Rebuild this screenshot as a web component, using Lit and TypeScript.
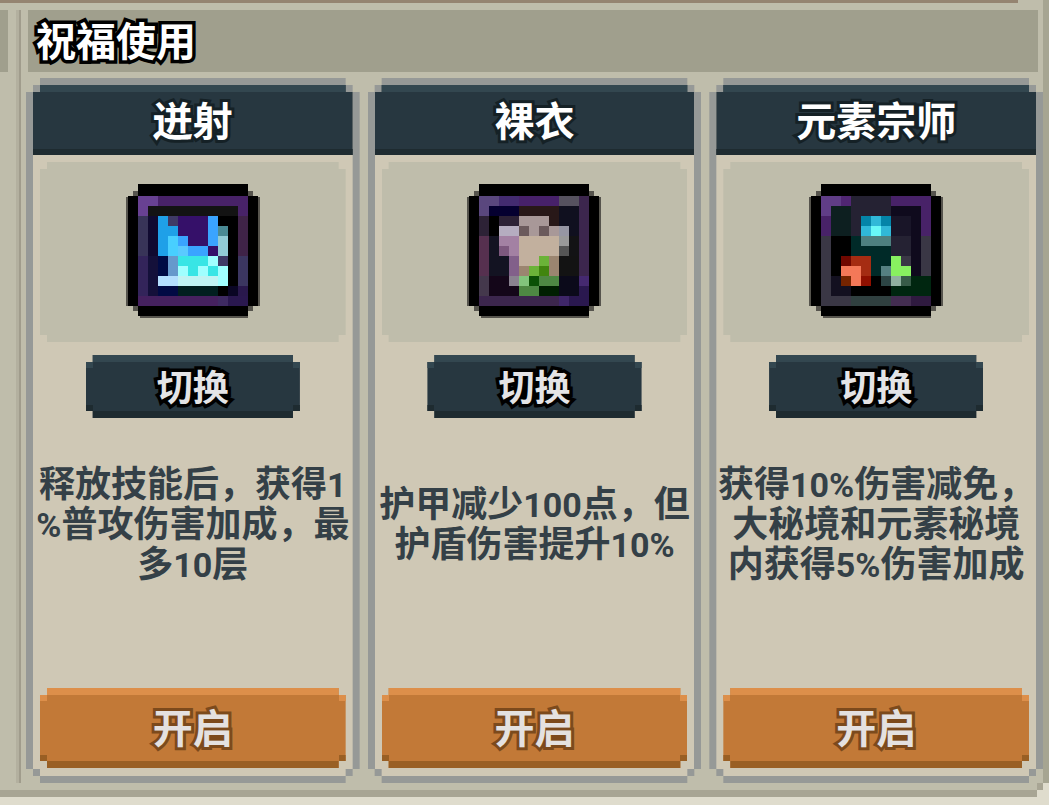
import { LitElement, html, svg, css } from "lit";
import { customElement, property } from "lit/decorators.js";

interface Blessing {
  name: string;
  art: string;
  lines: string[];
}

// Each row lists runs of "count*colour" on an 11 x 11 grid.
const ART: Record<string, string[]> = {
  burst: [
    "2*684192 9*482268",
    "1*684192 9*131313 1*482268",
    "1*383458 1*100a30 1*1fa0e8 1*3f3a66 3*351069 1*3aa4ff 2*000000 1*3f2347",
    "1*383458 1*100a30 2*1fa0e8 3*351069 1*3aa4ff 1*4a8a94 1*000000 1*3f2347",
    "1*383458 1*100a30 1*1fa0e8 1*48cfff 1*3aa4ff 2*351069 1*3aa4ff 1*92ccd6 1*000000 1*3f2347",
    "1*383458 1*100a30 1*1fa0e8 1*48cfff 1*5acaff 2*3aa4ff 1*351069 1*92ccd6 1*000000 1*3f2347",
    "1*33245a 1*14103a 1*000a44 1*6699cc 3*38e5e5 1*a0ffff 1*3f3a66 1*000000 1*3b3660",
    "1*33245a 1*14103a 1*000a44 1*6699cc 1*a0ffff 1*38e5e5 1*a0ffff 1*38e5e5 1*a0ffff 1*000000 1*3b3660",
    "1*33245a 1*14103a 2*b3dfff 4*c0f3f3 1*a0ffff 1*000000 1*3b3660",
    "1*33245a 1*14103a 2*000a44 4*001f1f 1*000000 1*0a0624 1*29184c",
    "8*45215f 1*3e2a62 2*2a184f",
  ],
  bare: [
    "2*5a477e 2*432b70 4*47216a 2*56525f 1*3c264d",
    "1*5a477e 3*050030 4*281818 2*10101f 1*3c264d",
    "1*2d2236 1*000000 2*2d2236 3*a89898 1*281818 2*10101f 1*3c264d",
    "1*2d2236 1*000000 2*b5adc0 1*6b5a5c 1*a89898 1*6b5a5c 1*a89898 1*9696a3 1*10101f 1*3c264d",
    "1*56304f 1*131322 2*a381a3 4*c2b09e 1*999999 1*131315 1*3c264d",
    "1*56304f 1*131322 1*7d587e 1*a381a3 4*c2b09e 1*555555 1*131315 1*3c264d",
    "1*56304f 2*131322 1*82608a 2*c2b09e 1*6bb338 1*9b8570 2*131313 1*3c264d",
    "1*56304f 2*131322 1*82608a 1*9b8570 1*6bb338 1*41850f 1*9b8570 2*131313 1*3c264d",
    "1*44384c 2*140619 1*8a8290 1*82c47c 1*0b5005 2*4e8843 2*0b0a1a 1*452970",
    "1*44384c 3*140619 2*4e8843 2*001f00 2*0b0a1a 1*2a184f",
    "8*3c264d 1*3f2669 2*2a184f",
  ],
  elements: [
    "2*603d87 1*502673 4*252233 4*482268",
    "1*603d87 2*0d1f20 4*252233 3*0f0a1d 1*482268",
    "1*482268 2*0d1f20 1*252233 1*0484a8 1*30b8d8 1*0484a8 2*191528 1*0f0a1d 1*482268",
    "1*482268 2*0d1f20 1*252233 1*30b8d8 1*68f8f8 1*30b8d8 2*191528 1*0f0a1d 1*482268",
    "1*3a3745 2*000000 1*002a28 3*4e8080 2*252233 1*0f0a1d 1*3a3745",
    "1*3a3745 2*000000 4*002a28 2*252233 1*0f0a1d 1*3a3745",
    "1*3a3745 1*000000 1*700800 2*a52c12 2*002a28 1*88f060 1*3a3745 1*0f0a1d 1*3a3745",
    "1*3a3745 1*000000 2*f47858 1*a52c12 1*002a28 1*558082 2*88f060 1*0f0a1d 1*3a3745",
    "1*3a3745 1*131020 1*752400 1*f47858 1*901000 1*000000 1*2c4545 1*90b0a0 1*385b48 2*002610",
    "1*3a3745 2*131020 4*000000 4*002610",
    "3*3a3745 4*304040 2*432d51 2*2f1a40",
  ],
};

const BLESSINGS: Blessing[] = [
  { name: "迸射", art: "burst", lines: ["释放技能后，获得1", "%普攻伤害加成，最", "多10层"] },
  { name: "裸衣", art: "bare", lines: ["护甲减少100点，但", "护盾伤害提升10%"] },
  { name: "元素宗师", art: "elements", lines: ["获得10%伤害减免，", "大秘境和元素秘境", "内获得5%伤害加成"] },
];

@customElement("pixel-art")
class PixelArt extends LitElement {
  @property() name = "";

  static styles = css`
    :host { display: block; }
    svg { display: block; }
  `;

  render() {
    const cells = ART[this.name].flatMap((row, y) => {
      let x = 0;
      return row.split(" ").map((run) => {
        const [count, colour] = run.split("*");
        const cell = svg`<rect x=${12 + x * 10} y=${12 + y * 10} width=${Number(count) * 10} height="10" fill=${"#" + colour}></rect>`;
        x += Number(count);
        return cell;
      });
    });
    return html`
      <svg width="134" height="134" viewBox="0 0 134 134" shape-rendering="crispEdges" aria-hidden="true">
        <path fill="#56544d" d="M7 7H127V127H7ZM0 13H134V122H0ZM14 127H122V134H14Z"></path>
        <path fill="#000" d="M12 0H122V132H12ZM2 12H132V122H2Z"></path>
        ${cells}
      </svg>
    `;
  }
}

@customElement("blessing-card")
class BlessingCard extends LitElement {
  @property({ attribute: false }) item!: Blessing;

  static styles = css`
    :host {
      display: flex;
      min-width: 0;
      padding: 7px;
      background: #969997;
      clip-path: polygon(
        14px 0, calc(100% - 14px) 0, calc(100% - 14px) 7px, calc(100% - 7px) 7px,
        calc(100% - 7px) 14px, 100% 14px, 100% calc(100% - 14px), calc(100% - 7px) calc(100% - 14px),
        calc(100% - 7px) calc(100% - 7px), calc(100% - 14px) calc(100% - 7px), calc(100% - 14px) 100%, 14px 100%,
        14px calc(100% - 7px), 7px calc(100% - 7px), 7px calc(100% - 14px), 0 calc(100% - 14px),
        0 14px, 7px 14px, 7px 7px, 14px 7px
      );
    }
    .card, .art, button {
      clip-path: polygon(
        7px 0, calc(100% - 7px) 0, calc(100% - 7px) 7px, 100% 7px,
        100% calc(100% - 7px), calc(100% - 7px) calc(100% - 7px), calc(100% - 7px) 100%, 7px 100%,
        7px calc(100% - 7px), 0 calc(100% - 7px), 0 7px, 7px 7px
      );
    }
    .card {
      flex: 1;
      min-width: 0;
      display: flex;
      flex-direction: column;
      align-items: center;
      padding-bottom: 8px;
      background: #cfc8b5;
    }
    h2 {
      align-self: stretch;
      box-sizing: border-box;
      height: 70px;
      margin: 0 0 7px;
      border-top: 7px solid #334750;
      border-bottom: 6px solid #1e2b30;
      background: #273740;
      color: #fff;
      font-size: 40px;
      line-height: 54px;
      font-weight: 700;
      text-align: center;
      -webkit-text-stroke: 6px #152126;
      paint-order: stroke fill;
    }
    .art {
      align-self: stretch;
      display: flex;
      justify-content: center;
      margin: 0 7px;
      padding: 22px 0 24px;
      background: #bfbdab;
    }
    button {
      border: 0;
      padding: 0 0 4px;
      font: inherit;
      font-weight: 700;
      cursor: pointer;
      background:
        linear-gradient(var(--hi), var(--hi)) 0 0 / 100% 7px no-repeat,
        linear-gradient(var(--hi), var(--hi)) 0 7px / 7px 6px no-repeat,
        linear-gradient(var(--hi), var(--hi)) 100% 7px / 7px 6px no-repeat,
        linear-gradient(var(--lo), var(--lo)) 0 100% / 100% 7px no-repeat,
        linear-gradient(var(--lo), var(--lo)) 0 calc(100% - 7px) / 7px 6px no-repeat,
        linear-gradient(var(--lo), var(--lo)) 100% calc(100% - 7px) / 7px 6px no-repeat,
        var(--mid);
      paint-order: stroke fill;
    }
    .swap {
      --hi: #334750;
      --mid: #273740;
      --lo: #1e2b30;
      width: 67%;
      height: 63px;
      margin-top: 13px;
      color: #e4e4e6;
      font-size: 36px;
      line-height: 56px;
      -webkit-text-stroke: 7px #000;
    }
    .open {
      --hi: #dd8f4a;
      --mid: #c27937;
      --lo: #995f24;
      align-self: stretch;
      height: 80px;
      margin: 0 7px;
      color: #e4e1e0;
      font-size: 40px;
      line-height: 72px;
      -webkit-text-stroke: 6px #7c4a1c;
    }
    p {
      flex: 1;
      display: flex;
      flex-direction: column;
      justify-content: center;
      align-items: center;
      margin: 0;
      padding-bottom: 64px;
      color: #344047;
      font-size: 36px;
      line-height: 40px;
      font-weight: 700;
      white-space: nowrap;
    }
    .line { display: block; }
    .num {
      font-family: Roboto, sans-serif;
      font-size: 34px;
      line-height: 24px;
    }
  `;

  render() {
    const { name, art, lines } = this.item;
    return html`
      <article class="card">
        <h2>${name}</h2>
        <div class="art"><pixel-art name=${art}></pixel-art></div>
        <button class="swap" type="button">切换</button>
        <p>
          ${lines.map(
            (line) => html`<span class="line">${line
              .split(/([0-9%]+)/)
              .map((part) => (/^[0-9%]+$/.test(part) ? html`<span class="num">${part}</span>` : part))}</span>`
          )}
        </p>
        <button class="open" type="button">开启</button>
      </article>
    `;
  }
}

@customElement("app-root")
class AppRoot extends LitElement {
  static styles = css`
    :host {
      display: flex;
      flex-direction: column;
      box-sizing: border-box;
      min-height: 100vh;
      padding-bottom: 8px;
      background: #dfdccd;
      font-family: "Noto Sans CJK SC", sans-serif;
    }
    .panel {
      flex: 1;
      display: flex;
      flex-direction: column;
      border-right: 6px solid #a6a592;
      border-bottom: 7px solid #a8a594;
      background:
        linear-gradient(#a8a594, #a8a594) 100% 100% / 6px 7px no-repeat,
        #bfbdab;
      clip-path: polygon(
        0 0, 100% 0, 100% calc(100% - 14px), calc(100% - 6px) calc(100% - 14px),
        calc(100% - 6px) calc(100% - 7px), calc(100% - 12px) calc(100% - 7px), calc(100% - 12px) 100%, 0 100%
      );
    }
    .rule {
      height: 3px;
      margin-right: 25px;
      background: #958471;
    }
    .body {
      flex: 1;
      display: flex;
      padding: 7px 0;
    }
    .previous {
      width: 8px;
      height: 62px;
      background: #a09f8d;
    }
    .divider {
      width: 5px;
      margin: 0 5px 0 8px;
      background: linear-gradient(90deg, #b3b09f 60%, #a09c8c 60%);
    }
    .section {
      flex: 1;
      min-width: 0;
      display: flex;
      flex-direction: column;
      gap: 6px;
    }
    h1 {
      height: 62px;
      margin: 0 5px 0 2px;
      padding-left: 8px;
      background: #a09f8d;
      color: #fff;
      font-size: 40px;
      line-height: 58px;
      font-weight: 700;
      -webkit-text-stroke: 7px #000;
      paint-order: stroke fill;
    }
    .cards {
      flex: 1;
      display: grid;
      grid-template-columns: repeat(3, minmax(0, 1fr));
      gap: 8px;
    }
  `;

  render() {
    return html`
      <main class="panel">
        <div class="rule"></div>
        <div class="body">
          <div class="previous"></div>
          <div class="divider"></div>
          <section class="section">
            <h1>祝福使用</h1>
            <div class="cards">
              ${BLESSINGS.map((item) => html`<blessing-card .item=${item}></blessing-card>`)}
            </div>
          </section>
        </div>
      </main>
    `;
  }
}
